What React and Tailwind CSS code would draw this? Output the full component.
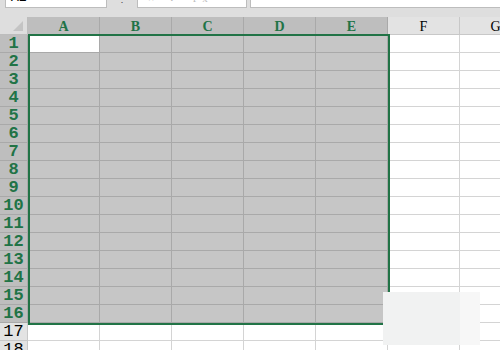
import React from "react";

const cols = ["A", "B", "C", "D", "E", "F", "G"];
const rows = Array.from({ length: 18 }, (_, i) => i + 1);

export default function App() {
  return (
    <div className="relative w-[500px] h-[350px] overflow-hidden bg-white" style={{ fontFamily: '"Liberation Serif", serif' }}>
      {/* top formula bar */}
      <div className="flex h-[17px] bg-[#dedede] items-start">
        <div className="ml-[5px] w-[102px] h-[8px] bg-white border border-t-0 border-[#bdbdbd] overflow-hidden">
          <div className="mt-[-9px] ml-[5px] text-[13px] leading-[14px] text-black" style={{ fontFamily: '"Liberation Mono", monospace' }}>A1</div>
        </div>
        <div className="w-[30px] h-[8px] overflow-hidden flex justify-center">
          <div className="mt-[-6px] text-[10px] leading-[10px] text-[#555]">⋮</div>
        </div>
        <div className="w-[110px] h-[8px] bg-white border border-t-0 border-[#bdbdbd] overflow-hidden">
          <div className="mt-[-7px] ml-[10px] text-[11px] leading-[10px] text-[#bbbbbb] tracking-[6px]">× ✓ fx</div>
        </div>
        <div className="ml-[3px] flex-1 h-[8px] bg-white border border-t-0 border-r-0 border-[#bdbdbd]" />
      </div>

      {/* header row */}
      <div className="grid grid-cols-[28px_repeat(7,72px)] grid-rows-[18px] h-[18px]">
        <div className="relative bg-[#dedede] border-r border-b border-[#bdbdbd]">
          <div className="absolute right-[4px] bottom-[3px] w-0 h-0 border-l-[10px] border-l-transparent border-b-[10px] border-b-[#c4c4c4]" />
        </div>
        {cols.map((c, i) => {
          const sel = i < 5;
          return (
            <div
              key={c}
              className={
                sel
                  ? "flex items-center justify-center overflow-hidden bg-[#bebebe] border-r border-b border-[#a9a9a9] text-[#217346] font-bold text-[14px] leading-none pt-[2px]"
                  : "flex items-center justify-center overflow-hidden bg-[#e3e3e3] border-r border-b border-[#c8c8c8] text-black text-[14px] leading-none pt-[2px]"
              }
            >
              {c}
            </div>
          );
        })}
      </div>

      {/* rows */}
      {rows.map((r) => {
        const selRow = r <= 16;
        return (
          <div key={r} className="grid grid-cols-[28px_repeat(7,72px)] grid-rows-[18px] h-[18px]">
            <div
              className={
                selRow
                  ? "flex items-center justify-center overflow-hidden bg-[#bebebe] border-r border-b border-[#a9a9a9] text-[#217346] font-bold text-[17px] leading-[17px]"
                  : "flex items-center justify-center overflow-hidden bg-[#e3e3e3] border-r border-b border-[#c8c8c8] text-black text-[17px] leading-[17px]"
              }
              style={{ fontFamily: '"Liberation Mono", monospace' }}
            >
              {r}
            </div>
            {cols.map((c, i) => {
              const sel = selRow && i < 5;
              const active = r === 1 && i === 0;
              let cls = "border-r border-b ";
              if (active) cls += "bg-white border-[#a9a9a9]";
              else if (sel) cls += "bg-[#c6c6c6] border-[#a9a9a9]";
              else cls += "bg-white border-[#d4d4d4]";
              return <div key={c} className={cls} />;
            })}
          </div>
        );
      })}

      {/* selection border */}
      <div className="absolute left-[28px] top-[34px] w-[362px] h-[291px] border-2 border-[#217346] pointer-events-none" />

      {/* floating panel */}
      <div className="absolute left-[383px] top-[292px] w-[97px] h-[53px] flex">
        <div className="flex-1 bg-[#f1f2f2]" />
        <div className="w-[20px] bg-[#f7f7f7]" />
      </div>
    </div>
  );
}
